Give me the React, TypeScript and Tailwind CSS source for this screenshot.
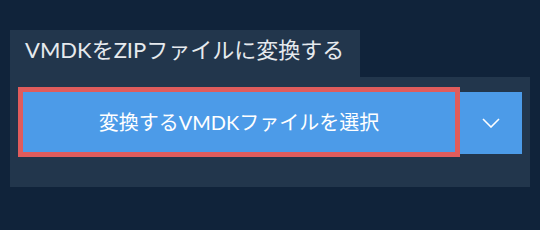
import { FC } from "react";

const Chevron: FC = () => (
  <svg width="18" height="10" viewBox="0 0 18 10" fill="none">
    <path d="M1 1l8 8 8-8" stroke="#ffffff" strokeWidth="1.6" />
  </svg>
);

const App: FC = () => {
  return (
    <div
      className="w-full h-[230px] bg-[#10233a] pt-[30px] pl-[10px]"
      style={{ fontFamily: 'Lato, "Noto Sans CJK JP", sans-serif' }}
    >
      <div className="w-[350px] h-[47px] bg-[#22364c] pl-[15px] pt-[4px]">
        <p className="text-[22px] leading-[32px] text-[#e6eaee]">
          VMDKをZIPファイルに変換する
        </p>
      </div>
      <div className="w-[520px] h-[110px] bg-[#22364c] pl-[8px] pt-[10px]">
        <div className="flex items-start">
          <button className="w-[442px] h-[70px] border-[5px] border-[#e05c5c] bg-[#4c9be8] flex items-center justify-center text-[20px] text-white">
            変換するVMDKファイルを選択
          </button>
          <button className="w-[62px] h-[62px] mt-[5px] bg-[#4c9be8] flex items-center justify-center">
            <Chevron />
          </button>
        </div>
      </div>
    </div>
  );
};

export default App;
